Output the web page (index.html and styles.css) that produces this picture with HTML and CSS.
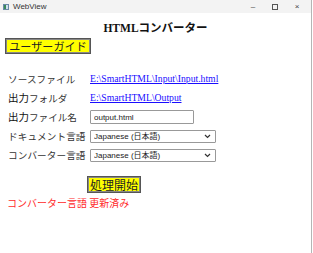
FILE: index.html
```html
<!DOCTYPE html>
<html lang="ja">
<head>
    <meta charset="UTF-8">
    <meta name="viewport" content="width=device-width, initial-scale=1.0">
    <title>WebView</title>
    <link rel="stylesheet" href="styles.css">
</head>
<body>

    <div class="window">
        <div class="titlebar">
            <span class="app-icon"></span>
            <span class="title">WebView</span>
            <div class="controls">
                <span class="ctl">&#8211;</span>
                <span class="ctl"><span class="box"></span></span>
                <span class="ctl">&#215;</span>
            </div>
        </div>

        <div class="page">
            <h1>HTMLコンバーター</h1>
            <button class="btn guide">ユーザーガイド</button>

            <div class="form">
                <label>ソースファイル</label>
                <a href="#">E:\SmartHTML\Input\Input.html</a>

                <label class="strong">出力<span>フォルダ</span></label>
                <a href="#">E:\SmartHTML\Output</a>

                <label class="strong">出力<span>ファイル名</span></label>
                <input type="text" value="output.html">

                <label>ドキュメント言語</label>
                <select><option>Japanese (日本語)</option></select>

                <label>コンバーター言語</label>
                <select><option>Japanese (日本語)</option></select>
            </div>

            <button class="btn start">処理開始</button>
            <div class="status">コンバーター言語 更新済み</div>
        </div>
    </div>

</body>
</html>
```

FILE: styles.css
```css
* {
    margin: 0;
    padding: 0;
    box-sizing: border-box;
}

body {
    width: 313px;
    height: 253px;
    background: #fff;
    font-family: 'Noto Sans CJK JP', sans-serif;
    color: #222;
    overflow: hidden;
}

.window {
    height: 253px;
    border-right: 1px solid #b5b5b5;
    margin-right: 1px;
}

.titlebar {
    height: 13px;
    background: #f3f3f3;
    display: flex;
    align-items: center;
    padding-left: 3px;
    font-family: 'Liberation Sans', sans-serif;
    font-size: 8px;
    color: #333;
}

.app-icon {
    width: 6px;
    height: 6px;
    border: 1px solid #6a8aa8;
    background: linear-gradient(90deg, #3a8a5a 50%, #cfe0ee 50%);
    margin-right: 4px;
}

.controls {
    margin-left: auto;
    display: flex;
    align-items: center;
    padding-right: 3px;
}

.ctl {
    width: 22px;
    display: flex;
    justify-content: center;
    font-size: 8px;
    color: #444;
}

.box {
    width: 6px;
    height: 6px;
    border: 1px solid #555;
}

.page {
    padding: 7px 5px 0 5px;
}

h1 {
    font-family: 'Liberation Serif', 'Noto Sans CJK JP', serif;
    font-size: 11.5px;
    font-weight: bold;
    text-align: center;
    color: #111;
    line-height: 16px;
    margin-bottom: 2px;
}

.btn {
    display: block;
    background: #ffff00;
    border: 1px solid #555;
    box-shadow: inset 0 0 0 1px #888;
    color: #222;
    font-family: 'Noto Sans CJK JP', sans-serif;
    cursor: pointer;
}

.guide {
    width: 86px;
    height: 16px;
    font-size: 11px;
    line-height: 14px;
    letter-spacing: 0.1px;
}

.form {
    display: grid;
    grid-template-columns: 82px auto;
    align-items: center;
    row-gap: 5px;
    margin-top: 18px;
    padding-left: 3px;
    justify-items: start;
}

.form label {
    font-size: 9.6px;
    color: #333;
    letter-spacing: 0.1px;
    line-height: 14px;
}

.form label.strong {
    font-size: 10.5px;
    color: #111;
    letter-spacing: 0;
}

.form label.strong span {
    font-size: 9.6px;
    color: #333;
}

.form a {
    font-family: 'Liberation Serif', serif;
    font-size: 9.7px;
    color: #1a0dff;
    line-height: 14px;
}

.form input,
.form select {
    font-family: 'Liberation Sans', 'Noto Sans CJK JP', sans-serif;
    font-size: 8px;
    color: #222;
    border: 1px solid #999;
    border-radius: 1px;
    background-color: #fff;
    height: 14px;
    outline: none;
}

.form input {
    width: 104px;
    padding: 0 3px;
}

.form select {
    -webkit-appearance: none;
    appearance: none;
    width: 126px;
    padding: 0 3px;
    height: 13px;
    background-image: url("data:image/svg+xml;utf8,<svg xmlns='http://www.w3.org/2000/svg' width='7' height='5'><path d='M1 1 L3.5 3.5 L6 1' fill='none' stroke='%23333' stroke-width='1.2'/></svg>");
    background-repeat: no-repeat;
    background-position: right 4px center;
}

.start {
    margin: 14px 0 0 82px;
    width: 54px;
    height: 17px;
    font-size: 12px;
    line-height: 15px;
}

.status {
    color: #ff2a2a;
    font-size: 10px;
    margin-top: 3px;
    padding-left: 2px;
    line-height: 14px;
}
```
